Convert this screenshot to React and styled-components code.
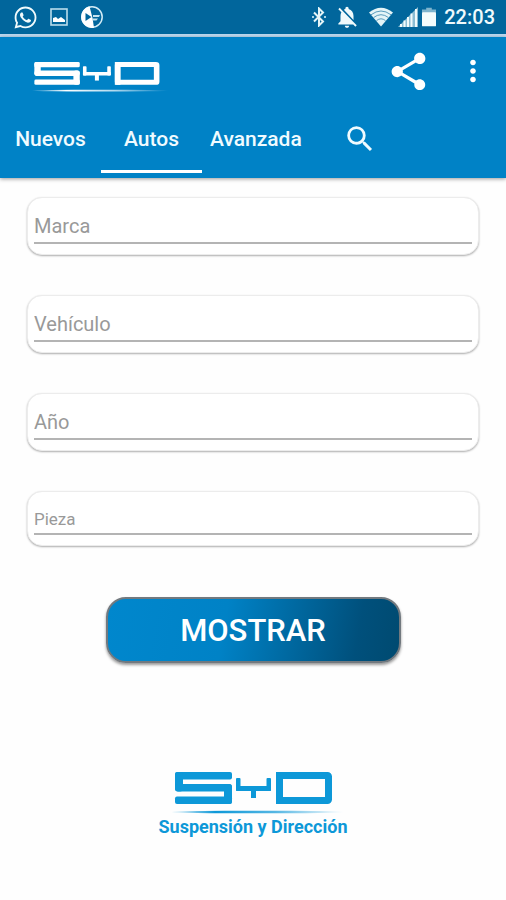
import React, { useState } from 'react';
import styled, { createGlobalStyle } from 'styled-components';
import { MdNotificationsOff, MdShare, MdMoreVert, MdSearch } from 'react-icons/md';
import { FaWhatsapp } from 'react-icons/fa';

const tabs = [
    { id: 'nuevos', text: 'Nuevos' },
    { id: 'autos', text: 'Autos' },
    { id: 'avanzada', text: 'Avanzada' },
    { id: 'buscar', label: 'Buscar', icon: <MdSearch size={34} /> },
];

const fields = [
    { id: 'marca', text: 'Marca' },
    { id: 'vehiculo', text: 'Vehículo' },
    { id: 'anio', text: 'Año' },
    { id: 'pieza', text: 'Pieza', small: true },
];

const PictureIcon = () => (
    <svg width="18" height="18" viewBox="0 0 18 18">
        <rect x="1" y="1" width="16" height="16" fill="none" stroke="#b9dcec" strokeWidth="1.6" />
        <path d="M3 14V10l3-1 2 2 3-2 4 3v2z" fill="#fff" />
    </svg>
);

const DiscIcon = () => (
    <svg width="24" height="24" viewBox="0 0 24 24">
        <circle cx="12" cy="12" r="10.2" fill="none" stroke="#d3ecf6" strokeWidth="1.5" />
        <path d="M9.500 1.200A11 11 0 0 0 1.200 12.500A11 11 0 0 0 14 22.800L12.500 13z" fill="#fff" />
        <path d="M5.500 8v8l6-4z" fill="#01669c" />
        <path d="M13 10h7l-1 2h-6zM12 13.500h6l-1.500 2h-4z" fill="#c4e2ee" />
    </svg>
);

const BluetoothIcon = () => (
    <svg width="14" height="20" viewBox="0 0 14 20">
        <path d="M2 5.500L11 14.500 7 18.500V1.500L11 5.500 2 14.500" fill="none" stroke="#e4f4f7" strokeWidth="2" />
        <path d="M0 9h2v2H0zM12 9h2v2h-2z" fill="#a9d3e6" />
    </svg>
);

const WifiIcon = () => (
    <svg width="26" height="20" viewBox="0 0 26 20">
        <path d="M1 5.500Q13-4 25 5.500L13 19.500z" fill="#e4f4f7" />
        <path d="M3 7.800Q13 .2 23 7.800M5.500 10.600Q13 4.800 20.500 10.600M8.500 13.600Q13 10 17.500 13.600" fill="none" stroke="#5a9dbd" strokeWidth="1" />
    </svg>
);

const SignalIcon = () => (
    <svg width="20" height="20" viewBox="0 0 20 20">
        <path d="M0 20L20 0V20z" fill="#8bbdd3" />
        <path d="M3 20v-3M6.500 20v-6.500M10 20V10M13.500 20V6.500M18 20V2" stroke="#f0fafb" strokeWidth="2" />
    </svg>
);

const BatteryIcon = () => (
    <svg width="14" height="20" viewBox="0 0 15 20">
        <path d="M4.500 0h6v2H15v4H0V2h4.500z" fill="#7fb4cd" />
        <rect y="5" width="15" height="15" rx="1" fill="#f4fcfc" />
    </svg>
);

// emblem shared by the header and the footer
const Emblem = ({ id, width, height, color }) => (
    <svg width={width} height={height} viewBox="-10 0 182 42" preserveAspectRatio="none" role="img" aria-label="SyD">
        <defs>
            <linearGradient id={id}>
                <stop offset="0" stopColor={color} stopOpacity="0.1" />
                <stop offset="0.25" stopColor={color} />
                <stop offset="0.6" stopColor={color} stopOpacity="0.7" />
                <stop offset="1" stopColor={color} stopOpacity="0" />
            </linearGradient>
        </defs>
        <g fill={color}>
            <rect x="3" y="0" width="57" height="7.5" rx="2" />
            <rect x="3" y="0" width="8" height="19.5" rx="3" />
            <rect x="3" y="12" width="57" height="7.5" rx="3" />
            <rect x="52" y="12" width="8" height="20" rx="3" />
            <rect x="3" y="24.500" width="57" height="7.5" rx="2" />
            <rect x="64" y="6" width="4.500" height="13" rx="1" />
            <rect x="64" y="14" width="35" height="5" rx="1" />
            <rect x="94.500" y="6" width="4.500" height="13" rx="1" />
            <rect x="79" y="14" width="5" height="12" />
            <rect x="104" y="0" width="7" height="32" />
        </g>
        <rect x="107.500" y="3.500" width="49" height="25" rx="1" fill="none" stroke={color} strokeWidth="7" />
        <ellipse cx="86" cy="40" rx="86" ry="1.300" fill={`url(#${id})`} />
    </svg>
);

const App = () => {
    const [active, setActive] = useState('autos');

    return (
        <Page>
            <GlobalStyle />
            <StatusBar>
                <StatusGroup $gap={12}>
                    <FaWhatsapp size={25} />
                    <PictureIcon />
                    <DiscIcon />
                </StatusGroup>
                <StatusGroup $gap={4}>
                    <IconBox><BluetoothIcon /></IconBox>
                    <IconBox><MdNotificationsOff size={26} /></IconBox>
                    <WifiIcon />
                    <SignalIcon />
                    <BatteryIcon />
                    <Clock>22:03</Clock>
                </StatusGroup>
            </StatusBar>
            <Header>
                <Toolbar>
                    <Emblem id="headLine" width={145} height={30} color="#fff" />
                    <Actions>
                        <IconBtn type="button" aria-label="Compartir"><MdShare size={45} /></IconBtn>
                        <IconBtn type="button" aria-label="Más opciones"><MdMoreVert size={34} /></IconBtn>
                    </Actions>
                </Toolbar>
                <TabList role="tablist">
                    {tabs.map((tab) => (
                        <Tab
                            key={tab.id}
                            type="button"
                            role="tab"
                            aria-label={tab.label}
                            aria-selected={active === tab.id}
                            $active={active === tab.id}
                            onClick={() => setActive(tab.id)}
                        >
                            {tab.icon || tab.text}
                        </Tab>
                    ))}
                </TabList>
            </Header>
            <Form onSubmit={(event) => event.preventDefault()}>
                {fields.map((field) => (
                    <FieldCard key={field.id}>
                        <FieldInput
                            id={field.id}
                            type="text"
                            placeholder={field.text}
                            aria-label={field.text}
                            $small={field.small}
                        />
                    </FieldCard>
                ))}
                <SubmitBtn type="submit">MOSTRAR</SubmitBtn>
            </Form>
            <Footer>
                <Emblem id="footLine" width={182} height={42} color="#0d98d8" />
                <Slogan>Suspensión y Dirección</Slogan>
            </Footer>
        </Page>
    );
};

const GlobalStyle = createGlobalStyle`
    * {
        box-sizing: border-box;
    }
    body {
        margin: 0;
        background: #fefefe;
        font-family: Roboto, "Liberation Sans", sans-serif;
    }
    button, input {
        font-family: inherit;
    }
    svg {
        display: block;
        flex-shrink: 0;
    }
`
const Page = styled.div`
    min-height: 100vh;
`
const StatusBar = styled.div`
    height: 37px;
    padding: 0 11px 0 13px;
    display: flex;
    justify-content: space-between;
    align-items: center;
    background: #01669c;
    border-bottom: 3px solid #bcd9f0;
    color: #f0fafc;
`
const StatusGroup = styled.div`
    display: flex;
    align-items: center;
    gap: ${(props) => props.$gap}px;
`
const IconBox = styled.span`
    padding-right: 4px;
`
const Clock = styled.span`
    padding-left: 4px;
    font-size: 20px;
    font-weight: 500;
    line-height: 24px;
`
const Header = styled.header`
    background: #0082c6;
    color: #fff;
    box-shadow: 0 1px 4px rgba(0, 0, 0, 0.4);
`
const Toolbar = styled.div`
    height: 68px;
    padding: 0 16px 0 24px;
    display: flex;
    justify-content: space-between;
    align-items: center;

    > svg {
        margin-top: 12px;
    }
`
const Actions = styled.div`
    display: flex;
    align-items: center;
    gap: 25px;
`
const IconBtn = styled.button`
    padding: 0;
    border: 0;
    background: none;
    color: inherit;
    cursor: pointer;
`
const TabList = styled.div`
    height: 73px;
    padding-bottom: 5px;
    display: flex;
`
const Tab = styled.button`
    min-width: 101px;
    padding: 2px 8px 0;
    display: flex;
    justify-content: center;
    align-items: center;
    border: 0;
    border-bottom: 3px solid ${(props) => (props.$active ? '#fff' : 'transparent')};
    background: none;
    color: #f0fbff;
    font-size: 21px;
    font-weight: 500;
    cursor: pointer;
`
const Form = styled.form`
    padding: 19px 27px 0;
    display: flex;
    flex-direction: column;
    gap: 40px;
`
const FieldCard = styled.div`
    padding: 12px 6px 10px;
    border: 1px solid #ececec;
    border-radius: 15px;
    background: #fff;
    box-shadow: 0 1px 2px rgba(0, 0, 0, 0.32);
`
const FieldInput = styled.input`
    display: block;
    width: 100%;
    height: ${(props) => (props.$small ? 31 : 34)}px;
    padding: 0;
    border: 0;
    border-bottom: 2px solid #b4b4b4;
    background: none;
    color: #444;
    font-size: ${(props) => (props.$small ? 17 : 20)}px;
    outline: none;

    &::placeholder {
        color: #999;
        opacity: 1;
    }
`
const SubmitBtn = styled.button`
    align-self: center;
    width: 295px;
    max-width: 100%;
    height: 66px;
    margin-top: 11px;
    border: 2px solid #72797f;
    border-radius: 20px;
    background: linear-gradient(100deg, #0087cd 0%, #0082c6 40%, #00507c 85%, #004a70 100%);
    box-shadow: 0 2px 3px rgba(0, 0, 0, 0.4);
    color: #fff;
    font-size: 31px;
    font-weight: 500;
    cursor: pointer;
`
const Footer = styled.footer`
    padding: 109px 0 24px;
    display: flex;
    flex-direction: column;
    align-items: center;
    gap: 2px;
`
const Slogan = styled.p`
    margin: 0;
    color: #0d98d8;
    font-size: 18px;
    font-weight: 700;
    line-height: 22px;
`

export default App;
